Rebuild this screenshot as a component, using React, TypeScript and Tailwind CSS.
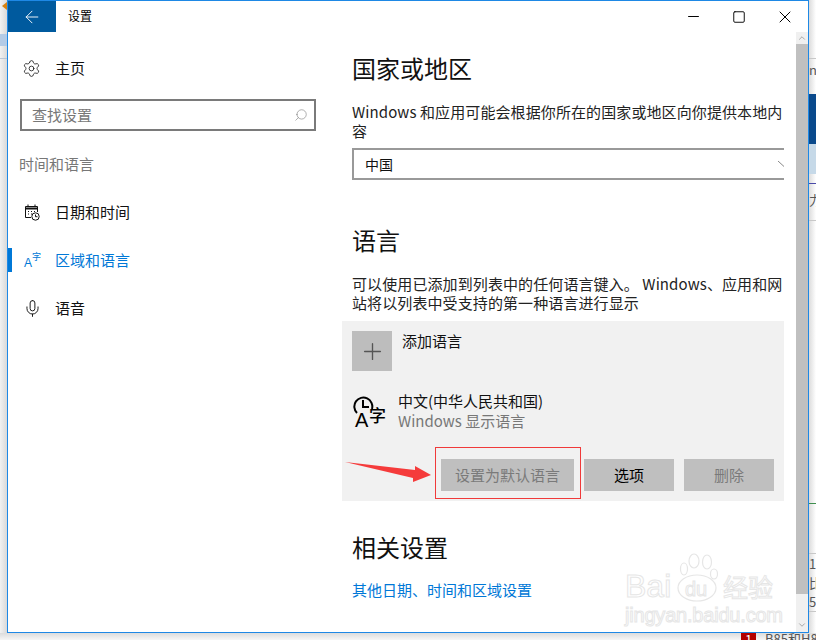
import { ArrowLeft, Minus, Square, X, Settings, Search, Mic, Plus, ChevronDown, ChevronUp } from "lucide-react";

const cjk = "font-['Noto_Sans_CJK_SC','Liberation_Sans',sans-serif]";

function RegionIcon() {
  return (
    <span className="relative block h-[16px] w-[16px] text-[#0078d7]">
      <span className="absolute left-0 top-[5px] font-['Liberation_Sans',sans-serif] text-[12px] leading-[12px]">A</span>
      <span className="absolute left-[8px] top-0 text-[9px] leading-[10px]">字</span>
    </span>
  );
}

function CalendarIcon() {
  return (
    <svg width="16" height="17" viewBox="0 0 16 17" fill="none" stroke="#111" strokeWidth="1">
      <path d="M7 13.5H1.5V2.5H13.5V8" />
      <path d="M1.5 4.5H13.5" strokeWidth="2" />
      <path d="M4 0.5V2.5M11 0.5V2.5" />
      <path d="M4 7.5h1M7 7.5h1M10 7.5h1M4 10h1M7 10h1" />
      <circle cx="11.5" cy="12.5" r="3.7" fill="white" />
      <path d="M11.5 10.5V12.7H13.5" />
    </svg>
  );
}

function NavItem({ icon, label, active }: { icon: React.ReactNode; label: string; active?: boolean }) {
  return (
    <div className={`flex h-12 items-center ${active ? "text-[#0078d7]" : "text-[#111]"}`}>
      <div className={`h-6 w-1 ${active ? "bg-[#0078d7]" : ""}`} />
      <div className="flex w-[43px] justify-center pr-[3px]">{icon}</div>
      <span className="text-[15px]">{label}</span>
    </div>
  );
}

function Watermark() {
  return (
    <div className="pointer-events-none absolute left-[617px] top-[552px] h-[70px] w-[150px] font-['Liberation_Sans',sans-serif] text-white [-webkit-text-stroke:1px_#e6e6e6]">
      <span className="absolute left-0 top-[17px] text-[32px] leading-[32px]">Bai</span>
      <svg className="absolute left-[50px] top-0" width="44" height="50" viewBox="0 0 44 50" fill="none" stroke="#e6e6e6" strokeWidth="1.2">
        <ellipse cx="9" cy="16" rx="3.5" ry="6" />
        <ellipse cx="19" cy="8" rx="5" ry="7" />
        <ellipse cx="32" cy="9" rx="4.5" ry="7" />
        <ellipse cx="39" cy="21" rx="3.5" ry="5" />
        <ellipse cx="22" cy="35" rx="19" ry="13" />
      </svg>
      <span className="absolute left-[60px] top-[24px] text-[20px] leading-[24px]">du</span>
      <span className={`absolute left-[98px] top-[18px] text-[25px] leading-[30px] ${cjk}`}>经验</span>
      <span className="absolute left-0 top-[51px] text-[20px] leading-[22px] tracking-[-0.2px]">jingyan.baidu.com</span>
    </div>
  );
}

export default function App() {
  return (
    <div className={`flex h-[640px] w-[816px] flex-col overflow-hidden bg-[#efefef] ${cjk}`}>
      <div className="flex h-[633px] w-[816px]">
        {/* page behind the window, left side */}
        <div className="flex w-[7px] shrink-0 flex-col bg-gradient-to-r from-[#f2f2f2] to-[#d9d9d9]">
          <div className="relative h-[34px]">
            <div className="absolute left-[2px] top-[2px] h-0 w-0 border-y-[4px] border-r-[5px] border-y-transparent border-r-[#d9820f]" />
          </div>
          <div className="h-[12px] bg-[#b4cbe6]" />
          <div className="h-[12px]" />
          <div className="h-px bg-[#b9c6d6]" />
        </div>

        {/* settings window */}
        <div className="relative flex h-full w-[802px] shrink-0 flex-col border border-[#1e88e5] bg-white">
          <div className="flex h-[31px] shrink-0 items-center text-black">
            <div className="flex h-full w-[48px] items-center justify-center bg-[#005a9e] text-white">
              <ArrowLeft size={20} strokeWidth={1.1} />
            </div>
            <span className="pb-[2px] pl-[12px] text-[12px]">设置</span>
            <div className="ml-auto flex items-center">
              <div className="flex w-[46px] justify-center"><Minus size={17} strokeWidth={1.4} /></div>
              <div className="flex w-[46px] justify-center"><Square size={14} strokeWidth={1.6} /></div>
              <div className="flex w-[46px] justify-center"><X size={20} strokeWidth={1.2} /></div>
            </div>
          </div>

          <div className="flex min-h-0 flex-1">
            {/* left pane */}
            <div className="w-[320px] shrink-0 pt-[12px]">
              <div className="flex h-[48px] items-center text-[#111]">
                <div className="flex w-[47px] justify-center"><Settings size={19} strokeWidth={1} /></div>
                <span className="text-[15px]">主页</span>
              </div>
              <div className="ml-[12px] mt-[7px] flex h-[32px] w-[296px] items-center justify-between border-2 border-[#7a7a7a] pl-[10px] pr-[6px]">
                <span className="text-[15px] text-[#777]">查找设置</span>
                <Search size={14} strokeWidth={1} className="-scale-x-100 text-[#777]" />
              </div>
              <div className="ml-[11px] mt-[22px] text-[15px] leading-[22px] text-[#777]">时间和语言</div>
              <div className="mt-[13px]">
                <NavItem icon={<CalendarIcon />} label="日期和时间" />
                <NavItem active icon={<RegionIcon />} label="区域和语言" />
                <NavItem icon={<Mic size={19} strokeWidth={1.2} />} label="语音" />
              </div>
            </div>

            {/* right pane */}
            <div className="min-w-0 flex-1 pl-[24px] pt-[18px] text-[#111]">
              <h2 className="text-[24px] leading-[36px]">国家或地区</h2>
              <p className="mt-[16px] w-[432px] text-[15px] leading-[19px] tracking-[0.1px] text-[#222]">
                Windows 和应用可能会根据你所在的国家或地区向你提供本地内容
              </p>
              <div className="mt-[8px] flex h-[32px] w-[432px] items-center justify-between border-y-2 border-l-2 border-[#999] pl-[11px]">
                <span className="text-[14px]">中国</span>
                <svg width="6" height="6" viewBox="0 0 6 6" fill="none" stroke="#888" strokeWidth="1">
                  <path d="M0 0L6 5.5" />
                </svg>
              </div>
              <h2 className="mt-[42px] text-[24px] leading-[36px]">语言</h2>
              <p className="mt-[16px] w-[432px] text-[15px] leading-[19px] tracking-[0.1px] text-[#222]">
                可以使用已添加到列表中的任何语言键入。 Windows、应用和网站将以列表中受支持的第一种语言进行显示
              </p>
              <div className="relative -ml-[10px] mt-[9px] h-[180px] w-[442px] bg-[#f1f1f1] pl-[10px] pt-[10px]">
                <div className="flex">
                  <div className="flex h-[40px] w-[40px] items-center justify-center bg-[#bdbdbd] text-[#555]">
                    <Plus size={27} strokeWidth={1.2} />
                  </div>
                  <span className="pl-[10px] text-[15px] leading-[20px]">添加语言</span>
                </div>
                <div className="mt-[20px] flex">
                  <div className="relative mt-[5px] h-[32px] w-[46px] text-black">
                    <svg className="absolute left-[1px] top-0" width="22" height="22" viewBox="0 0 22 22" fill="none" stroke="#000" strokeWidth="2">
                      <path d="M4 17A9 9 0 1 1 19 13" />
                      <path d="M10 4V11H16" />
                    </svg>
                    <span className="absolute left-[3px] top-[14px] font-['Liberation_Sans',sans-serif] text-[20px] leading-[20px]">A</span>
                    <span className="absolute left-[17px] top-[9px] text-[17px] font-medium leading-[20px]">字</span>
                  </div>
                  <div>
                    <div className="text-[15px] leading-[20px]">中文(中华人民共和国)</div>
                    <div className="text-[15px] leading-[20px] text-[#777]">Windows 显示语言</div>
                  </div>
                </div>
                <div className="mt-[28px] flex">
                  <button className="ml-[89px] flex h-[32px] w-[133px] items-center justify-center bg-[#bfbfbf] text-[15px] text-[#7a7a7a]">设置为默认语言</button>
                  <button className="ml-[10px] flex h-[32px] w-[90px] items-center justify-center bg-[#bfbfbf] text-[15px] text-black">选项</button>
                  <button className="ml-[10px] flex h-[32px] w-[90px] items-center justify-center bg-[#bfbfbf] text-[15px] text-[#7a7a7a]">删除</button>
                </div>
                {/* red annotation */}
                <div className="absolute left-[93px] top-[126px] h-[52px] w-[146px] border border-[#f03a3a]" />
                <svg className="absolute left-[3px] top-[141px]" width="87" height="21" viewBox="0 0 87 21">
                  <path d="M0 0L70 8L70 4L86 13L68 20L68 16Z" fill="#f53b3b" />
                </svg>
              </div>
              <h2 className="mt-[28px] text-[24px] leading-[36px]">相关设置</h2>
              <a className="mt-[15px] block text-[15px] leading-[20px] text-[#0078d7]">其他日期、时间和区域设置</a>
            </div>

            {/* scrollbar */}
            <div className="flex w-[12px] shrink-0 flex-col bg-[#f0f0f0]">
              <div className="flex h-[12px] items-center justify-center text-[#999]"><ChevronUp size={10} /></div>
              <div className="h-[550px] bg-[#c0c0c0]" />
              <div className="mt-auto flex h-[14px] items-center justify-center text-[#999]"><ChevronDown size={10} /></div>
            </div>
          </div>
          <Watermark />
        </div>

        {/* page behind the window, right side */}
        <div className="flex min-w-0 flex-1 flex-col overflow-hidden bg-gradient-to-r from-[#dcdcdc] to-white text-[13px] leading-[16px] text-[#555]">
          <div className="h-[58px]" />
          <div className="h-px bg-[#c8c8c8]" />
          <div className="h-[35px] pt-[3px]">n</div>
          <div className="h-[50px] bg-[#0a4a8c]" />
          <div className="h-[30px] bg-[#c6d9e8]" />
          <div className="h-[9px]" />
          <div className="h-px bg-[#4a4aa8]" />
          <div className="h-[36px] pt-[8px]">力</div>
          <div className="h-px bg-[#c8c8c8]" />
          <div className="h-[282px]" />
          <div className="h-px bg-[#3f8f4f]" />
          <div className="h-[49px]" />
          <div className="h-px bg-[#c8c8c8]" />
          <div className="leading-[19px]">1</div>
          <div className="leading-[19px]">比</div>
          <div className="leading-[19px]">5</div>
          <div className="h-px bg-[#c8c8c8]" />
        </div>
      </div>

      {/* page behind the window, bottom */}
      <div className="flex min-h-0 flex-1 overflow-hidden bg-gradient-to-b from-[#dcdcdc] to-[#f6f6f6]">
        <div className="ml-[741px] flex h-[7px] w-[15px] shrink-0 justify-center bg-[#b30000] text-[13px] leading-[14px] text-white">1</div>
        <div className="ml-[9px] -mt-[1px] shrink-0 whitespace-nowrap text-[13px] leading-[14px] text-[#555]">B85和H81</div>
      </div>
    </div>
  );
}
